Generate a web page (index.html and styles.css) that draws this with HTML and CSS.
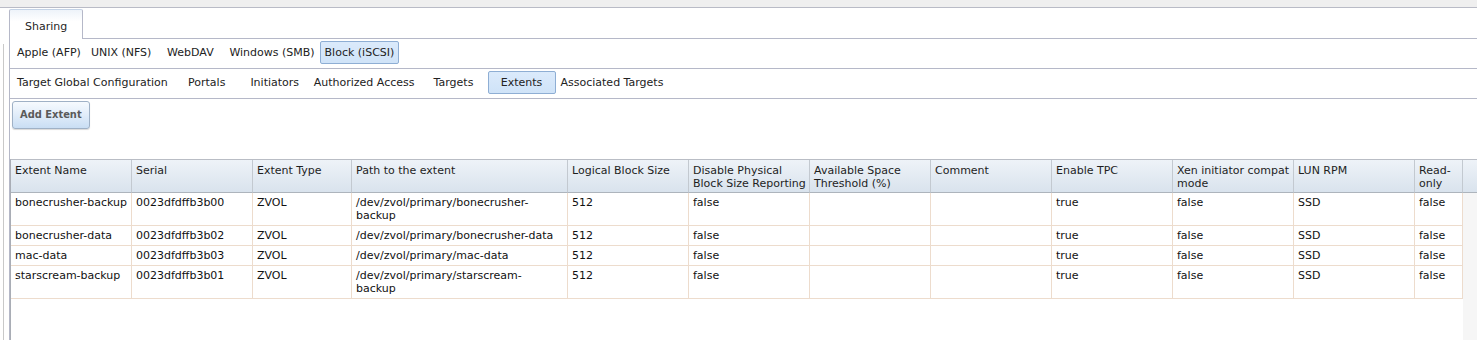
FILE: index.html
```html
<!DOCTYPE html>
<html lang="en">
<head>
    <meta charset="UTF-8">
    <title>Sharing - Block (iSCSI) - Extents</title>
    <link rel="stylesheet" href="styles.css">
</head>
<body>
    <div class="topbar"></div>

    <div class="workspace">
        <!-- left tree panel, scrolled out of view -->
        <div class="side"></div>

        <div class="main">
            <div class="tabstrip">
                <div class="tab active">Sharing</div>
            </div>

            <div class="panel">
                <div class="subnav">
                    <span class="navtab">Apple (AFP)</span>
                    <span class="navtab">UNIX (NFS)</span>
                    <span class="navtab">WebDAV</span>
                    <span class="navtab">Windows (SMB)</span>
                    <span class="navtab selected">Block (iSCSI)</span>
                </div>

                <div class="subnav">
                    <span class="navtab">Target Global Configuration</span>
                    <span class="navtab">Portals</span>
                    <span class="navtab">Initiators</span>
                    <span class="navtab">Authorized Access</span>
                    <span class="navtab">Targets</span>
                    <span class="navtab selected">Extents</span>
                    <span class="navtab">Associated Targets</span>
                </div>

                <div class="toolbar">
                    <button class="btn-add">Add Extent</button>
                </div>

                <div class="grid">
                    <table class="grid-table">
                        <thead>
                            <tr>
                                <th class="w-name">Extent Name</th>
                                <th class="w-name">Serial</th>
                                <th class="w-type">Extent Type</th>
                                <th class="w-path">Path to the extent</th>
                                <th class="w-name">Logical Block Size</th>
                                <th class="w-name">Disable Physical<br>Block Size Reporting</th>
                                <th class="w-name">Available Space<br>Threshold (%)</th>
                                <th class="w-name">Comment</th>
                                <th class="w-name">Enable TPC</th>
                                <th class="w-name">Xen initiator compat<br>mode</th>
                                <th class="w-name">LUN RPM</th>
                                <th class="w-ro">Read-<br>only</th>
                            </tr>
                        </thead>
                        <tbody>
                            <tr>
                                <td>bonecrusher-backup</td>
                                <td>0023dfdffb3b00</td>
                                <td>ZVOL</td>
                                <td>/dev/zvol/primary/bonecrusher-<br>backup</td>
                                <td>512</td>
                                <td>false</td>
                                <td></td>
                                <td></td>
                                <td>true</td>
                                <td>false</td>
                                <td>SSD</td>
                                <td>false</td>
                            </tr>
                            <tr>
                                <td>bonecrusher-data</td>
                                <td>0023dfdffb3b02</td>
                                <td>ZVOL</td>
                                <td>/dev/zvol/primary/bonecrusher-data</td>
                                <td>512</td>
                                <td>false</td>
                                <td></td>
                                <td></td>
                                <td>true</td>
                                <td>false</td>
                                <td>SSD</td>
                                <td>false</td>
                            </tr>
                            <tr>
                                <td>mac-data</td>
                                <td>0023dfdffb3b03</td>
                                <td>ZVOL</td>
                                <td>/dev/zvol/primary/mac-data</td>
                                <td>512</td>
                                <td>false</td>
                                <td></td>
                                <td></td>
                                <td>true</td>
                                <td>false</td>
                                <td>SSD</td>
                                <td>false</td>
                            </tr>
                            <tr>
                                <td>starscream-backup</td>
                                <td>0023dfdffb3b01</td>
                                <td>ZVOL</td>
                                <td>/dev/zvol/primary/starscream-<br>backup</td>
                                <td>512</td>
                                <td>false</td>
                                <td></td>
                                <td></td>
                                <td>true</td>
                                <td>false</td>
                                <td>SSD</td>
                                <td>false</td>
                            </tr>
                        </tbody>
                    </table>
                    <div class="gutter">
                        <div class="gutter-head"></div>
                    </div>
                </div>
            </div>
        </div>
    </div>
</body>
</html>
```

FILE: styles.css
```css
body {
    margin: 0;
    padding: 0;
    background: #fff;
    font-family: 'DejaVu Sans', Verdana, sans-serif;
    font-size: 11px;
    color: #1a1a1a;
    height: 340px;
    overflow: hidden;
}

.topbar {
    height: 7px;
    background: #efefef;
    border-bottom: 1px solid #b9bbc6;
}

.workspace {
    display: flex;
    height: 332px;
}

/* left tree panel */
.side {
    width: 3px;
    margin-top: 36px;
    border-right: 1px solid #c9c9c9;
}

.main {
    flex: 1;
    margin-left: 5px;
    display: flex;
    flex-direction: column;
}

.tabstrip {
    height: 30px;
    display: flex;
    align-items: flex-end;
    border-bottom: 1px solid #b5b8c8;
}

.tab {
    height: 19px;
    padding: 10px 15px 0 15px;
    width: 42px;
    border: 1px solid #b5b8c8;
    border-bottom: none;
    border-top-color: #c4d3e6;
    margin-bottom: -1px;
    background: linear-gradient(#eef3f9, #fff 40%);
    color: #1f1f1f;
    border-radius: 2px 2px 0 0;
}

.panel {
    flex: 1;
    border-left: 1px solid #b5b8c8;
    display: flex;
    flex-direction: column;
}

.subnav {
    height: 27px;
    padding: 2px 0 0 2px;
    border-bottom: 1px solid #b5b8c8;
    display: flex;
    align-items: flex-start;
}

.navtab {
    box-sizing: border-box;
    min-width: 68px;
    height: 23px;
    line-height: 21px;
    padding: 0 4px;
    border: 1px solid transparent;
    border-radius: 2px;
    text-align: center;
    white-space: nowrap;
    color: #222;
}

.navtab.selected {
    background: linear-gradient(#dbeafb, #cfe3f8);
    border-color: #8eaed4;
}

.toolbar {
    height: 58px;
    padding: 2px 0 0 2px;
}

.btn-add {
    height: 28px;
    padding: 0 7px 2px;
    font-family: 'DejaVu Sans Condensed', 'DejaVu Sans', Verdana, sans-serif;
    font-size: 11px;
    font-weight: bold;
    color: #5a5a5a;
    border: 1px solid #9fb1c6;
    border-radius: 3px;
    background: linear-gradient(#f6fafe, #e3eefa 45%, #c9def4);
    box-shadow: 0 1px 1px rgba(0, 0, 0, 0.15);
}

.grid {
    flex: 1;
    display: flex;
    border-top: 1px solid #b9bdc5;
    border-left: 1px solid #a9adb5;
}

.grid-table {
    width: 1452px;
    table-layout: fixed;
    border-collapse: separate;
    border-spacing: 0;
    align-self: flex-start;
}

.grid-table th,
.grid-table td {
    box-sizing: border-box;
    text-align: left;
    vertical-align: top;
    line-height: 13px;
    padding: 3px 1px 3px 4px;
    font-weight: normal;
    white-space: nowrap;
}

.grid-table th {
    padding-top: 4px;
    padding-bottom: 2px;
    height: 33px;
    color: #1e1e1e;
    background: linear-gradient(#eef3f8, #d9e3ed);
    border-right: 1px solid #c3c9d0;
    border-bottom: 1px solid #adb4bc;
}

.grid-table td {
    color: #111;
    border-right: 1px solid #eddccd;
    border-bottom: 1px solid #eddccd;
}

.w-name { width: 121px; }
.w-type { width: 99px; }
.w-path { width: 216px; }
.w-ro { width: 48px; }

.gutter {
    flex: 1;
    background: #f6f6f6;
}

.gutter-head {
    height: 33px;
    box-sizing: border-box;
    background: linear-gradient(#eef3f8, #d9e3ed);
    border-bottom: 1px solid #adb4bc;
}
```
